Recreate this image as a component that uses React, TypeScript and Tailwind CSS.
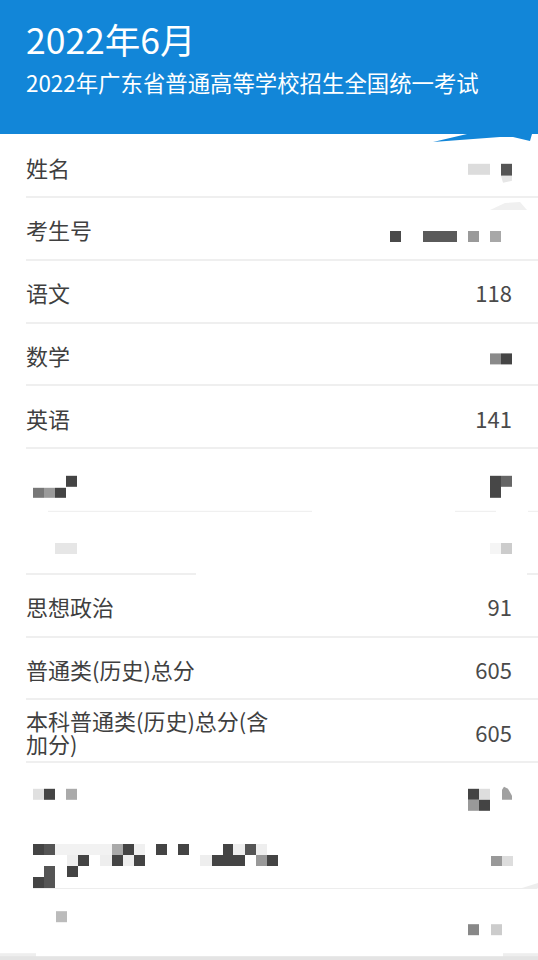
import React from "react";

type Cell = [number, number, number, number, string];

const FONT = { fontFamily: '"Noto Sans CJK SC", "Noto Sans", sans-serif' };

function Mosaic({ cells, top, polys }: { cells: Cell[]; top: number; polys?: [string, string][] }) {
  return (
    <svg className="absolute inset-0 pointer-events-none" width="538" height="100%">
      {cells.map(([x1, y1, x2, y2, c], i) => (
        <rect key={i} x={x1} y={y1 - top} width={x2 - x1} height={y2 - y1} fill={c} />
      ))}
      {polys?.map(([pts, c], i) => (
        <polygon
          key={"p" + i}
          points={pts
            .split(" ")
            .map((p) => {
              const [x, y] = p.split(",").map(Number);
              return `${x},${y - top}`;
            })
            .join(" ")}
          fill={c}
        />
      ))}
    </svg>
  );
}

function Row({
  label,
  value,
  top,
  cells,
  polys,
  divider = true,
}: {
  label?: React.ReactNode;
  value?: string;
  top: number;
  cells?: Cell[];
  polys?: [string, string][];
  divider?: boolean;
}) {
  return (
    <div className="relative h-[62.8px] flex items-center pl-[26px] pr-[26px]">
      {cells && <Mosaic cells={cells} top={top} polys={polys} />}
      <div className="flex-1 text-[22px] leading-[22px] text-[#3f3f3f]">{label}</div>
      <div className="text-[22px] leading-[22px] text-[#4a4a4a]">{value}</div>
      {divider && <div className="absolute left-[26px] right-0 bottom-0 h-[2px] bg-[#efefef]" />}
    </div>
  );
}

export default function App() {
  return (
    <div className="w-[538px] h-[960px] bg-white overflow-hidden relative" style={FONT}>
      <div className="h-[134px] bg-[#1286d8] pl-[26px] pt-[17px] text-white">
        <div className="text-[35.5px] leading-[44px]">2022年6月</div>
        <div className="text-[22.4px] leading-[30px] mt-[6px]">2022年广东省普通高等学校招生全国统一考试</div>
      </div>
      <svg className="absolute left-0 top-[134px] pointer-events-none" width="538" height="10">
        <polygon points="433,8 500,3 513,3 530,7 532,0 467,0" fill="#1286d8" />
      </svg>
      <div className="pt-[1.2px]">
        <Row
          label="姓名"
          top={135.2}
          cells={[
            [468, 164, 490, 175, "#dcdcdc"],
            [501, 164, 512, 176, "#555555"],
          ]}
          polys={[["501,176 512,176 512,181 503,183", "#e6e6e6"]]}
        />
        <Row
          label="考生号"
          top={198}
          cells={[
            [390, 231, 401, 242, "#4a4a4a"],
            [423, 231, 457, 242, "#5a5a5a"],
            [468, 231, 479, 242, "#9a9a9a"],
            [490, 231, 501, 242, "#a8a8a8"],
          ]}
          polys={[["490,210 505,203 520,202 527,210", "#f0f0f0"]]}
        />
        <Row label="语文" value="118" top={260.8} />
        <Row
          label="数学"
          top={323.6}
          cells={[
            [490, 353, 501, 364, "#8a8a8a"],
            [501, 353, 512, 364, "#454545"],
          ]}
        />
        <Row label="英语" value="141" top={386.4} />
        <Row
          top={449.2}
          divider={false}
          cells={[
            [33, 488, 44, 498, "#777777"],
            [44, 488, 55, 498, "#9a9a9a"],
            [55, 488, 66, 498, "#444444"],
            [66, 476, 77, 487, "#444444"],
            [490, 476, 501, 498, "#474747"],
            [501, 476, 512, 487, "#666666"],
            [48, 511, 312, 513, "#f0f0f0"],
            [455, 511, 496, 513, "#f0f0f0"],
            [528, 511, 538, 513, "#f0f0f0"],
          ]}
        />
        <Row
          top={512}
          divider={false}
          cells={[
            [55, 543, 77, 554, "#e6e6e6"],
            [490, 543, 501, 554, "#f5f5f5"],
            [501, 543, 512, 554, "#cccccc"],
            [26, 573, 196, 575, "#efefef"],
            [527, 573, 538, 575, "#efefef"],
          ]}
        />
        <Row label="思想政治" value="91" top={574.8} />
        <Row label="普通类(历史)总分" value="605" top={637.6} />
        <Row
          label={
            <div className="leading-[23px] w-[260px]">
              本科普通类(历史)总分(含
              <br />
              加分)
            </div>
          }
          value="605"
          top={700.4}
        />
        <Row
          top={763.2}
          divider={false}
          cells={[
            [33, 789, 44, 800, "#e0e0e0"],
            [44, 789, 55, 800, "#444444"],
            [66, 789, 77, 800, "#aaaaaa"],
            [468, 789, 479, 800, "#444444"],
            [479, 789, 490, 800, "#dddddd"],
            [468, 800, 479, 811, "#999999"],
            [479, 800, 490, 811, "#444444"],
          ]}
          polys={[["504,787 508,789 512,796 512,800 502,800 502,790", "#a0a0a0"]]}
        />
        <div className="relative h-[62.8px]">
          <Mosaic
            top={826}
            cells={[
              [33, 844, 44, 855, "#444444"],
              [44, 844, 55, 855, "#555555"],
              [55, 844, 112, 855, "#f2f2f2"],
              [112, 844, 123, 855, "#aaaaaa"],
              [123, 844, 134, 855, "#444444"],
              [134, 844, 145, 855, "#f0f0f0"],
              [156, 844, 167, 855, "#444444"],
              [178, 844, 189, 855, "#444444"],
              [223, 844, 233, 855, "#444444"],
              [233, 844, 245, 855, "#eeeeee"],
              [245, 844, 256, 855, "#555555"],
              [256, 844, 267, 855, "#eeeeee"],
              [67, 855, 78, 866, "#eeeeee"],
              [78, 855, 89, 866, "#444444"],
              [100, 855, 112, 866, "#eeeeee"],
              [112, 855, 123, 866, "#444444"],
              [123, 855, 134, 866, "#eeeeee"],
              [134, 855, 145, 866, "#444444"],
              [200, 855, 212, 866, "#eeeeee"],
              [212, 855, 245, 866, "#444444"],
              [256, 855, 267, 866, "#999999"],
              [267, 855, 278, 866, "#444444"],
              [44, 866, 55, 888, "#555555"],
              [33, 877, 44, 888, "#444444"],
              [67, 866, 78, 877, "#444444"],
              [491, 856, 502, 866, "#999999"],
              [502, 856, 513, 866, "#dddddd"],
              [33, 888, 522, 900, "#ededed"],
            ]}
            polys={[["522,888 538,883 538,888 524,900 522,900", "#ededed"]]}
          />
        </div>
        <div className="relative h-[72px]">
          <Mosaic
            top={888.8}
            cells={[
              [56, 911, 67, 922, "#bbbbbb"],
              [468, 924, 479, 935, "#888888"],
              [491, 924, 502, 935, "#cccccc"],
              [0, 953, 36, 960, "#eeeeee"],
              [503, 953, 538, 960, "#eeeeee"],
              [0, 956, 538, 960, "#e4e4e4"],
            ]}
          />
        </div>
      </div>
    </div>
  );
}
